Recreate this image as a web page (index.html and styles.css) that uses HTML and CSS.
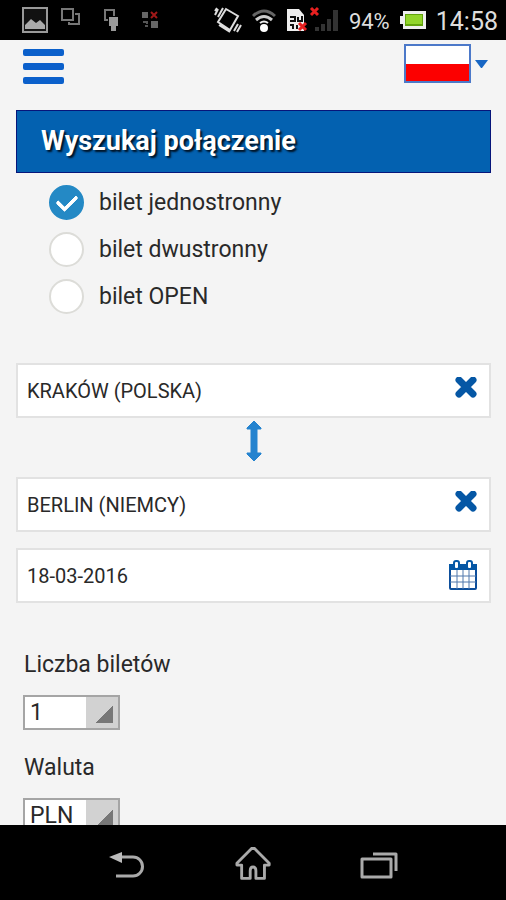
FILE: index.html
```html
<!DOCTYPE html>
<html lang="pl">
<head>
<meta charset="utf-8">
<meta name="viewport" content="width=device-width, initial-scale=1">
<title>Wyszukaj połączenie</title>
<link rel="stylesheet" href="styles.css">
</head>
<body>
<header class="status">
  <div class="status-group notices">
    <svg width="26" height="26" viewBox="0 0 26 26"><rect x="1" y="1" width="24" height="24" fill="#111" stroke="#999" stroke-width="2"/><path d="M3 22v-4l6-6 5 4 4-3 5 5v4z" fill="#aaa"/></svg>
    <svg width="30" height="26" viewBox="0 0 30 26" fill="none" stroke="#777" stroke-width="2"><path d="M1 2h11v11H1zM14 7h4v10H8v-2"/></svg>
    <svg width="24" height="26" viewBox="0 0 24 26"><path d="M4 13H1V3h9v6" fill="none" stroke="#777" stroke-width="2"/><path d="M5 10h9v9h-2v5H7v-5H5z" fill="#999"/></svg>
    <svg width="18" height="26" viewBox="0 0 18 26"><path d="M1 5h6v6H1zM10 14h7v7h-7z" fill="#666"/><path d="M10 5l6 6m0-6l-6 6" stroke="#a01818" stroke-width="2"/><path d="M2 15h4v2m-2 2h3" stroke="#555" stroke-width="2" fill="none"/></svg>
  </div>
  <div class="status-group signals">
    <svg width="28" height="28" viewBox="0 0 28 28" fill="none" stroke="#ddd" stroke-width="2"><path d="M12 3l12 7-8 14-12-8zM5 19l11 7"/><path d="M1 9l3-6M4 11l5-9M1 5l2-3M20 25l4-7M23 26l4-7"/></svg>
    <svg width="24" height="24" viewBox="0 0 24 24" fill="none" stroke-width="3"><path d="M1 8Q12-2 23 8" stroke="#666"/><path d="M4 12q8-7 16 0" stroke="#ccc"/><path d="M8 15q4-3 8 0" stroke="#eee" stroke-width="2"/><circle cx="12" cy="20" r="4" fill="#fff"/></svg>
    <svg width="53" height="30" viewBox="0 0 53 30"><path d="M1 4h12l5 6v16H1z" fill="#eee"/><path d="M4 12h5v4H4m8-4v4h4V11M4 20h3v4m4-4v4" fill="none" stroke="#111" stroke-width="2"/><path d="M13 18l7 7m0-7l-7 7M25 3l7 7m0-7l-7 7" stroke="#e82020" stroke-width="3"/><path d="M29 22h4v4h-4zM35 19h4v7h-4zM41 14h4v12h-4zM47 5h5v21h-5z" fill="#333"/></svg>
    <span class="percent">94%</span>
    <svg width="26" height="18" viewBox="0 0 26 18"><path d="M0 5h3V0h23v18H3v-5H0z" fill="#eee"/><path d="M5 3h18v12H5z" fill="#62a30c"/><path d="M6 4h16v9H6z" fill="#92d52b"/></svg>
    <time class="clock">14:58</time>
  </div>
</header>

<main class="page">
  <div class="toolbar">
    <button class="menu" type="button" aria-label="Menu"><span class="bar"></span><span class="bar"></span><span class="bar"></span></button>
    <button class="language" type="button" aria-label="Język polski"><span class="flag"></span><svg width="13" height="8" viewBox="0 0 13 8"><path d="M0 0h13L7 8H6z" fill="#1766c4"/></svg></button>
  </div>

  <form class="search">
    <h1 class="title">Wyszukaj połączenie</h1>
    <div class="options">
      <label class="option"><input class="radio" type="radio" name="ticket" checked>bilet jednostronny</label>
      <label class="option"><input class="radio" type="radio" name="ticket">bilet dwustronny</label>
      <label class="option"><input class="radio" type="radio" name="ticket">bilet OPEN</label>
    </div>

    <div class="field">
      <input class="text" type="text" aria-label="Skąd" value="KRAKÓW (POLSKA)">
      <button class="action" type="button" aria-label="Wyczyść skąd"><svg width="22" height="28" viewBox="0 0 22 28"><path d="M4 3l14 14M18 3L4 17" stroke="#0557a5" stroke-width="7" stroke-linecap="round"/></svg></button>
    </div>
    <button class="swap" type="button" aria-label="Zamień"><svg width="16" height="42" viewBox="0 0 16 42"><path d="M8 1l7 7v1h-4v24h4v1l-7 7-7-7v-1h4V9H1V8z" fill="#2483cf" stroke="#2483cf" stroke-linejoin="round"/></svg></button>
    <div class="field">
      <input class="text" type="text" aria-label="Dokąd" value="BERLIN (NIEMCY)">
      <button class="action" type="button" aria-label="Wyczyść dokąd"><svg width="22" height="28" viewBox="0 0 22 28"><path d="M4 3l14 14M18 3L4 17" stroke="#0557a5" stroke-width="7" stroke-linecap="round"/></svg></button>
    </div>
    <div class="field date">
      <input class="text" type="text" aria-label="Data" value="18-03-2016">
      <button class="action" type="button" aria-label="Kalendarz"><svg width="30" height="34" viewBox="0 0 30 34"><rect x="2" y="6" width="26" height="24" rx="1" fill="#fff" stroke="#0d4e9b" stroke-width="2"/><path d="M1 5h28v6H1z" fill="#0557a5"/><path d="M9 11v19M15 11v19M21 11v19M2 17h26M2 23h26" stroke="#5078ad" stroke-width="1"/><rect x="6" y="2" width="5" height="8" rx="2" fill="#fff" stroke="#0557a5" stroke-width="2"/><rect x="19" y="2" width="5" height="8" rx="2" fill="#fff" stroke="#0557a5" stroke-width="2"/></svg></button>
    </div>

    <div class="choice">
      <label class="caption" for="count">Liczba biletów</label>
      <div class="picker"><select class="select" id="count"><option>1</option></select></div>
    </div>
    <div class="choice">
      <label class="caption" for="currency">Waluta</label>
      <div class="picker"><select class="select" id="currency"><option>PLN</option></select></div>
    </div>
  </form>
</main>

<nav class="system">
  <button class="key" type="button" aria-label="Wstecz"><svg width="38" height="36" viewBox="0 0 38 36"><path d="M14 10h11a9 9 0 0 1 0 19H8" fill="none" stroke="#aaa" stroke-width="3"/><path d="M1 10l13-5v11z" fill="#bbb"/></svg></button>
  <button class="key" type="button" aria-label="Ekran główny"><svg width="38" height="36" viewBox="0 0 38 36"><path d="M19 -1l17 17v2h-5v14h-9v-8q0-4-3-4t-3 4v8H7V18H2v-2z" fill="none" stroke="#aaa" stroke-width="3" stroke-linejoin="round" transform="translate(1 1) scale(.95)"/></svg></button>
  <button class="key" type="button" aria-label="Ostatnie aplikacje"><svg width="38" height="36" viewBox="0 0 38 36" fill="none" stroke="#aaa" stroke-width="3" stroke-linejoin="round"><path d="M2 12h29v18H2zM13 7h23v17"/></svg></button>
</nav>
</body>
</html>
```
FILE: styles.css
```css
* {
  box-sizing: border-box;
}

body {
  margin: 0;
  height: 100vh;
  display: flex;
  flex-direction: column;
  background: #f4f4f4;
  color: #292929;
  font-family: Roboto, "Liberation Sans", sans-serif;
  font-size: 23px;
  line-height: 28px;
}

button {
  display: flex;
  align-items: center;
  justify-content: center;
  padding: 0;
  border: 0;
  background: none;
}

svg {
  display: block;
  flex: none;
}

.status {
  flex: none;
  height: 40px;
  padding: 0 8px 0 22px;
  display: flex;
  align-items: center;
  justify-content: space-between;
  background: #000;
  color: #ddd;
}

.status-group {
  display: flex;
  align-items: center;
}

.notices {
  gap: 13px;
}

.signals {
  gap: 10px;
}

.percent {
  padding-top: 3px;
  font-size: 22px;
}

.clock {
  padding-top: 3px;
  font-size: 25px;
}

.page {
  flex: 1;
  min-height: 0;
  overflow: hidden;
  padding: 4px 15px 0 16px;
}

.toolbar {
  height: 66px;
  padding: 0 3px 0 7px;
  display: flex;
  align-items: flex-start;
  justify-content: space-between;
}

.menu {
  flex-direction: column;
  gap: 7px;
  padding-top: 5px;
}

.bar {
  width: 41px;
  height: 7px;
  border-radius: 2px;
  background: #0b60cb;
}

.language {
  gap: 4px;
}

.flag {
  width: 67px;
  height: 39px;
  border: 2px solid #4c79c9;
  background: linear-gradient(#fff 50%, #fc0000 50%);
}

.title {
  margin: 0;
  padding: 16px 24px 17px;
  border: 1px solid #06157a;
  background: #0361b0;
  color: #fff;
  font-size: 27px;
  font-weight: 700;
  line-height: 28px;
  text-shadow: 2px 2px 2px #012;
}

.options {
  padding: 6px 0 43px 33px;
}

.option {
  display: flex;
  align-items: center;
  gap: 15px;
  height: 47px;
}

.radio {
  appearance: none;
  display: grid;
  place-items: center;
  width: 35px;
  height: 35px;
  margin: 0;
  border: 2px solid #dcdcd8;
  border-radius: 50%;
  background: #fff;
}

.radio:checked {
  border-color: #2489c5;
  background: #2489c5;
}

.radio:checked::after {
  content: "";
  width: 16px;
  height: 9px;
  margin-bottom: 5px;
  border: solid #fff;
  border-width: 0 0 4px 4px;
  border-radius: 2px;
  rotate: -45deg;
}

.field {
  display: flex;
  align-items: center;
  height: 55px;
  padding-right: 11px;
  border: 2px solid #e2e2e2;
  background: #fff;
}

.text {
  flex: 1;
  min-width: 0;
  height: 100%;
  padding: 0 9px;
  border: 0;
  background: none;
  color: #292929;
  font: inherit;
  font-size: 20px;
}

.action {
  min-width: 24px;
}

.swap {
  width: 100%;
  height: 59px;
  padding-bottom: 13px;
}

.date {
  margin-top: 16px;
  margin-bottom: 48px;
}

.choice {
  display: flex;
  flex-direction: column;
  align-items: flex-start;
  gap: 16px;
  margin-bottom: 24px;
  padding-left: 7px;
}

.caption {
  padding-left: 1px;
}

.picker {
  position: relative;
  display: flex;
}

.picker::after {
  content: "";
  position: absolute;
  right: 7px;
  bottom: 7px;
  width: 17px;
  height: 17px;
  background: linear-gradient(135deg, transparent 50%, #777 50%);
  pointer-events: none;
}

.select {
  appearance: none;
  width: 97px;
  height: 35px;
  padding: 0 5px;
  border: 2px solid #a5a5a5;
  border-radius: 0;
  background: linear-gradient(90deg, #fff 61px, #d2d2d2 61px);
  color: #292929;
  font: inherit;
}

.system {
  flex: none;
  height: 75px;
  padding: 4px 64px 0;
  display: flex;
  align-items: center;
  justify-content: space-between;
  background: #000;
}

.key {
  flex: 1;
}
```
